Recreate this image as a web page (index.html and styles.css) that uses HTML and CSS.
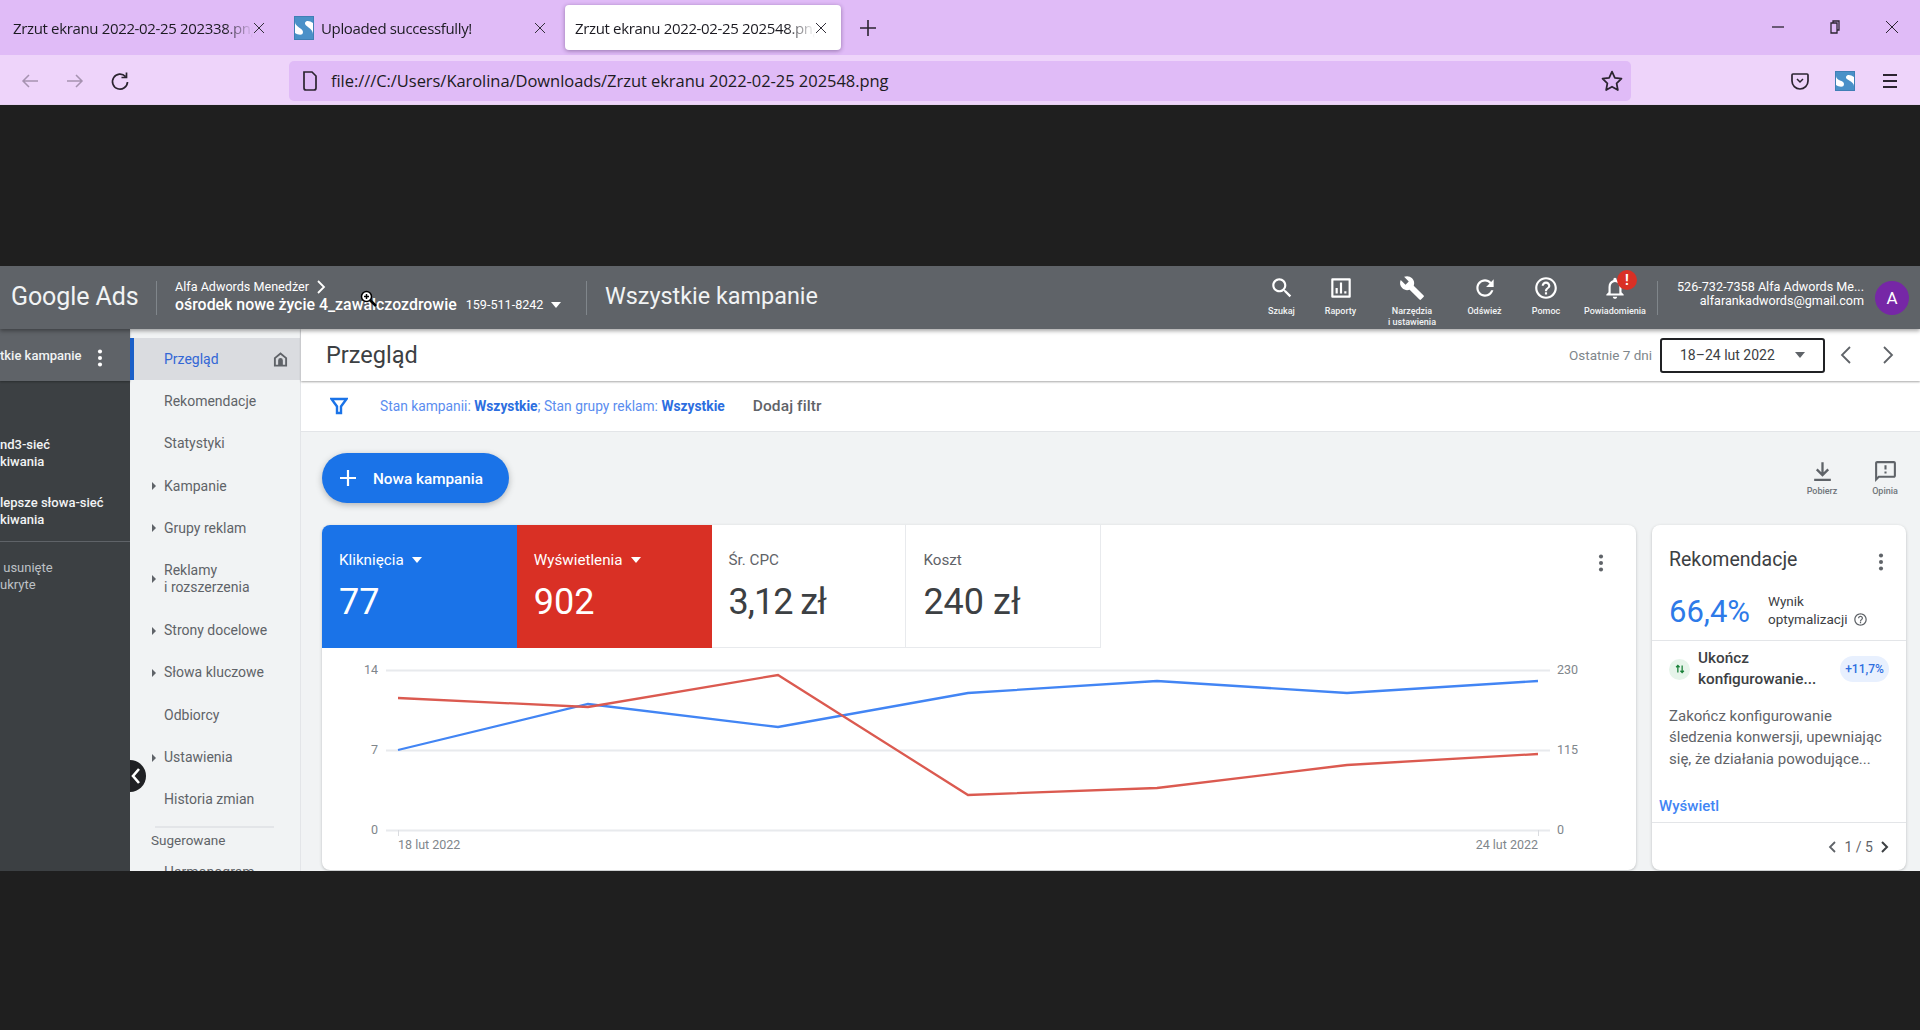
FILE: index.html
```html
<!DOCTYPE html>
<html lang="pl">
<head>
<meta charset="utf-8">
<title>Zrzut ekranu 2022-02-25 202548.png</title>
<link rel="stylesheet" href="styles.css">
</head>
<body>
<div class="tabbar">
  <div class="tab tab-first"><span class="tab-title">Zrzut ekranu 2022-02-25 202338.png</span><svg class="tab-x" viewBox="0 0 12 12"><path d="M1 1l10 10M11 1L1 11" stroke="#33303a" stroke-width="1"/></svg></div>
  <div class="tab tab-second">
    <svg class="favicon" viewBox="0 0 20 24"><rect x=".5" y=".5" width="19" height="23" fill="#fff" stroke="#3f7fb5"/><path d="M1 1h18v6c-3-2-7-3-8 0s8 5 8 11v5H1v-6c3 2 8 3 8-1S1 11 1 6z" fill="#4a90c8"/></svg>
    <span class="tab-title tab-title-plain">Uploaded successfully!</span><svg class="tab-x" viewBox="0 0 12 12"><path d="M1 1l10 10M11 1L1 11" stroke="#33303a" stroke-width="1"/></svg>
  </div>
  <div class="tab tab-active"><span class="tab-title">Zrzut ekranu 2022-02-25 202548.png</span><svg class="tab-x" viewBox="0 0 12 12"><path d="M1 1l10 10M11 1L1 11" stroke="#33303a" stroke-width="1"/></svg></div>
  <svg class="newtab" viewBox="0 0 16 16"><path d="M8 0v16M0 8h16" stroke="#2b2430" stroke-width="1.6"/></svg>
  <div class="winctl">
    <svg viewBox="0 0 14 14"><path d="M1 7h12" stroke="#2b2430" stroke-width="1.3"/></svg>
    <svg viewBox="0 0 14 14"><path d="M5 3V1h6v9H9M3 3h6v10H3z" fill="none" stroke="#2b2430" stroke-width="1.3"/></svg>
    <svg viewBox="0 0 14 14"><path d="M1 1l12 12M13 1L1 13" stroke="#2b2430" stroke-width="1"/></svg>
  </div>
</div>
<div class="toolbar">
  <div class="nav-btns">
    <svg viewBox="0 0 20 20"><path d="M18 10H3M9 4l-6 6 6 6" fill="none" stroke="#a692b0" stroke-width="1.5"/></svg>
    <svg viewBox="0 0 20 20"><path d="M2 10h15M11 4l6 6-6 6" fill="none" stroke="#a692b0" stroke-width="1.5"/></svg>
    <svg viewBox="0 0 20 20"><path d="M15.500 5.500A7.500 7.500 0 1 0 17.500 11M16.500 1.500v5h-5" fill="none" stroke="#2b2430" stroke-width="1.7"/></svg>
  </div>
  <div class="urlbar">
    <svg class="url-file" viewBox="0 0 16 20"><path d="M2 1h8l4 4v12a2 2 0 0 1-2 2H4a2 2 0 0 1-2-2z" fill="none" stroke="#2b2430" stroke-width="1.7"/></svg>
    <span class="url-text">file:///C:/Users/Karolina/Downloads/Zrzut ekranu 2022-02-25 202548.png</span>
    <svg class="url-star" viewBox="0 0 20 20"><path d="M10 1.500l2.600 5.600 6 .8-4.400 4.200 1.100 6.100-5.300-3-5.300 3 1.100-6.100L1.400 7.900l6-.8z" fill="none" stroke="#2b2430" stroke-width="1.6" stroke-linejoin="round"/></svg>
  </div>
  <div class="ext-btns">
    <svg viewBox="0 0 20 20"><path d="M3 3h14a1 1 0 0 1 1 1v6a8 8 0 0 1-16 0V4a1 1 0 0 1 1-1z" fill="none" stroke="#2b2430" stroke-width="1.7"/><path d="M7 8l3 3 3-3" fill="none" stroke="#2b2430" stroke-width="1.5"/></svg>
    <svg viewBox="0 0 20 20"><rect x=".5" y=".5" width="19" height="19" fill="#fff" stroke="#3f7fb5"/><path d="M1 1h18v5c-3-2-7-3-8 0s8 4 8 9v4H1v-5c3 2 8 3 8-1S1 10 1 5z" fill="#4a90c8"/></svg>
    <svg viewBox="0 0 20 20"><path d="M3 4h14M3 10h14M3 16h14" stroke="#2b2430" stroke-width="1.8"/></svg>
  </div>
</div>
<div class="viewer">
  <div class="app">
    <header class="appbar">
      <div class="logo">Google Ads</div>
      <div class="account">
        <div class="account-parent">Alfa Adwords Menedżer
          <svg viewBox="0 0 10 14"><path d="M2 1l6 6-6 6" fill="none" stroke="#fff" stroke-width="1.8"/></svg>
        </div>
        <div class="account-name"><b>ośrodek nowe życie 4_zawalczozdrowie</b><span>159-511-8242</span><i class="caret caret-white"></i></div>
      </div>
      <div class="page-title">Wszystkie kampanie</div>
      <div class="tools">
        <div class="tool"><svg viewBox="0 0 24 24"><path d="M15.500 14h-.79l-.28-.27C15.410 12.590 16 11.110 16 9.500 16 5.910 13.090 3 9.500 3S3 5.910 3 9.500 5.910 16 9.500 16c1.610 0 3.090-.59 4.230-1.570l.27.28v.79l5 4.990L20.490 19l-4.990-5zm-6 0C7.010 14 5 11.990 5 9.500S7.010 5 9.500 5 14 7.010 14 9.500 11.990 14 9.500 14z"/></svg><span>Szukaj</span></div>
        <div class="tool"><svg viewBox="0 0 24 24"><path d="M4 3h16a1 1 0 0 1 1 1v16a1 1 0 0 1-1 1H4a1 1 0 0 1-1-1V4a1 1 0 0 1 1-1zm1 2v14h14V5zm2 7h2v5H7zm4-5h2v10h-2zm4 8h2v2h-2z"/></svg><span>Raporty</span></div>
        <div class="tool"><svg viewBox="0 0 24 24"><path d="M22.700 19l-9.100-9.100c.9-2.300.4-5-1.500-6.900-2-2-5-2.400-7.400-1.300L9 6 6 9 1.600 4.700C.4 7.100.9 10.100 2.900 12.100c1.900 1.900 4.600 2.400 6.900 1.500l9.100 9.100c.4.4 1 .4 1.400 0l2.300-2.300c.5-.4.5-1.100.1-1.400z"/></svg><span>Narzędzia<br>i ustawienia</span></div>
        <div class="tool"><svg viewBox="0 0 24 24"><path d="M17.650 6.350C16.200 4.900 14.210 4 12 4c-4.420 0-7.990 3.580-7.990 8s3.570 8 7.990 8c3.730 0 6.840-2.550 7.730-6h-2.080c-.82 2.330-3.040 4-5.650 4-3.310 0-6-2.690-6-6s2.690-6 6-6c1.660 0 3.140.69 4.220 1.780L13 11h7V4l-2.350 2.350z"/></svg><span>Odśwież</span></div>
        <div class="tool"><svg viewBox="0 0 24 24"><path d="M11 18h2v-2h-2v2zm1-16C6.480 2 2 6.480 2 12s4.480 10 10 10 10-4.480 10-10S17.520 2 12 2zm0 18c-4.410 0-8-3.590-8-8s3.590-8 8-8 8 3.590 8 8-3.590 8-8 8zm0-14c-2.210 0-4 1.790-4 4h2c0-1.100.9-2 2-2s2 .9 2 2c0 2-3 1.750-3 5h2c0-2.250 3-2.500 3-5 0-2.210-1.790-4-4-4z"/></svg><span>Pomoc</span></div>
        <div class="tool tool-bell"><svg viewBox="0 0 24 24"><path d="M12 22c1.100 0 2-.9 2-2h-4c0 1.100.89 2 2 2zm6-6v-5c0-3.070-1.640-5.640-4.500-6.320V4c0-.83-.67-1.500-1.500-1.500s-1.500.67-1.500 1.500v.68C7.630 5.360 6 7.920 6 11v5l-2 2v1h16v-1l-2-2zm-2 1H8v-6c0-2.480 1.510-4.500 4-4.500s4 2.020 4 4.500v6z"/></svg><span>Powiadomienia</span><em class="alert">!</em></div>
      </div>
      <div class="user">
        <div class="user-text"><div>526-732-7358 Alfa Adwords Me...</div><div>alfarankadwords@gmail.com</div></div>
        <div class="avatar">A</div>
      </div>
    </header>
    <div class="app-body">
      <aside class="side">
        <div class="side-head"><span>tkie kampanie</span><svg class="dots dots-white" viewBox="0 0 6 22"><circle cx="3" cy="3" r="2.500"/><circle cx="3" cy="11" r="2.500"/><circle cx="3" cy="19" r="2.500"/></svg></div>
        <div class="side-group side-group-first"><div>nd3-sieć</div><div>kiwania</div></div>
        <div class="side-group side-group-second"><div>lepsze słowa-sieć</div><div>kiwania</div></div>
        <div class="side-group side-group-muted"><div>&nbsp;usunięte</div><div>ukryte</div></div>
      </aside>
      <nav class="menu">
        <div class="menu-item menu-active">Przegląd
          <svg class="home" viewBox="0 0 16 16"><path d="M8 1.500l6 5v8H2v-8z" fill="none" stroke="#5f6368" stroke-width="2"/><path d="M5.500 14.500V9a2.500 2.500 0 0 1 5 0v5.500z" fill="#5f6368"/></svg>
        </div>
        <div class="menu-item">Rekomendacje</div>
        <div class="menu-item">Statystyki</div>
        <div class="menu-item menu-arrow">Kampanie</div>
        <div class="menu-item menu-arrow">Grupy reklam</div>
        <div class="menu-item menu-arrow menu-tall">Reklamy<br>i rozszerzenia</div>
        <div class="menu-item menu-arrow">Strony docelowe</div>
        <div class="menu-item menu-arrow">Słowa kluczowe</div>
        <div class="menu-item">Odbiorcy</div>
        <div class="menu-item menu-arrow">Ustawienia</div>
        <div class="menu-item">Historia zmian</div>
        <div class="menu-sep"></div>
        <div class="menu-heading">Sugerowane</div>
        <div class="menu-item menu-cut">Harmonogram</div>
      </nav>
      <button class="collapse" type="button" aria-label="Zwiń"><svg viewBox="0 0 10 18"><path d="M8 2L2 9l6 7" fill="none" stroke="#fff" stroke-width="2.600"/></svg></button>
      <main class="main">
        <div class="main-head">
          <h1>Przegląd</h1>
          <div class="range-label">Ostatnie 7 dni</div>
          <div class="range-box"><span>18–24 lut 2022</span><i class="caret caret-grey"></i></div>
          <div class="range-nav">
            <svg viewBox="0 0 12 20"><path d="M10 2L2 10l8 8" fill="none" stroke="#5f6368" stroke-width="1.800"/></svg>
            <svg viewBox="0 0 12 20"><path d="M2 2l8 8-8 8" fill="none" stroke="#5f6368" stroke-width="1.800"/></svg>
          </div>
        </div>
        <div class="filter">
          <svg class="funnel" viewBox="0 0 18 18"><path d="M1.500 2h15L11 9.500V16H7V9.500z" fill="none" stroke="#1a73e8" stroke-width="2.400"/></svg>
          <div class="filter-text">Stan kampanii: <b>Wszystkie</b>; Stan grupy reklam: <b>Wszystkie</b></div>
          <div class="filter-add">Dodaj filtr</div>
        </div>
        <div class="content">
          <div class="actions">
            <button class="fab" type="button"><svg viewBox="0 0 18 18"><path d="M9 1v16M1 9h16" stroke="#fff" stroke-width="2.200"/></svg><span>Nowa kampania</span></button>
            <div class="action-icons">
              <div class="action"><svg viewBox="0 0 24 24"><path d="M12 3v12M6.500 10l5.500 5.500 5.500-5.500M4 20h16" fill="none" stroke="#5f6368" stroke-width="2.200"/></svg><span>Pobierz</span></div>
              <div class="action"><svg viewBox="0 0 24 24"><path d="M20 2H4c-1.100 0-2 .9-2 2v18l4-4h14c1.100 0 2-.9 2-2V4c0-1.100-.9-2-2-2zm0 14H5.170L4 17.170V4h16v12zM11 12h2v2h-2zm0-6h2v4h-2z" fill="#5f6368"/></svg><span>Opinia</span></div>
            </div>
          </div>
          <div class="cards">
            <section class="card chart-card">
              <div class="metrics">
                <div class="metric metric-blue"><div class="metric-label">Kliknięcia<i class="caret caret-white"></i></div><div class="metric-value">77</div></div>
                <div class="metric metric-red"><div class="metric-label">Wyświetlenia<i class="caret caret-white"></i></div><div class="metric-value">902</div></div>
                <div class="metric"><div class="metric-label">Śr. CPC</div><div class="metric-value metric-tight">3,12 zł</div></div>
                <div class="metric"><div class="metric-label">Koszt</div><div class="metric-value">240 zł</div></div>
                <svg class="dots dots-grey metrics-menu" viewBox="0 0 6 22"><circle cx="3" cy="3" r="2.500"/><circle cx="3" cy="11" r="2.500"/><circle cx="3" cy="19" r="2.500"/></svg>
              </div>
              <svg class="chart" viewBox="0 0 1314 222" width="1314" height="222">
                <path d="M64 22.500H1228M64 102.500H1228M64 182.500H1228" stroke="#e8eaed" stroke-width="1.800" fill="none"/>
                <path d="M76.500 182v6M1216.500 182v6" stroke="#dadce0"/>
                <polyline points="76,102 266,56 456,79 646,45 835,33 1025,45 1216,33" fill="none" stroke="#4285f4" stroke-width="2.300"/>
                <polyline points="76,50 266,59 456,27 646,147 835,140 1025,117 1216,106" fill="none" stroke="#db5a50" stroke-width="2.300"/>
                <g class="axis">
                  <text x="56" y="26" text-anchor="end">14</text>
                  <text x="56" y="106" text-anchor="end">7</text>
                  <text x="56" y="186" text-anchor="end">0</text>
                  <text x="1235" y="26">230</text>
                  <text x="1235" y="106">115</text>
                  <text x="1235" y="186">0</text>
                  <text x="76" y="201">18 lut 2022</text>
                  <text x="1216" y="201" text-anchor="end">24 lut 2022</text>
                </g>
              </svg>
            </section>
            <section class="card rec-card">
              <div class="rec-top">
                <div class="rec-title"><h2>Rekomendacje</h2><svg class="dots dots-grey" viewBox="0 0 6 22"><circle cx="3" cy="3" r="2.500"/><circle cx="3" cy="11" r="2.500"/><circle cx="3" cy="19" r="2.500"/></svg></div>
                <div class="rec-score"><div class="score">66,4%</div><div class="score-label">Wynik<br>optymalizacji<svg viewBox="0 0 24 24"><path d="M11 18h2v-2h-2v2zm1-16C6.480 2 2 6.480 2 12s4.480 10 10 10 10-4.480 10-10S17.520 2 12 2zm0 18c-4.410 0-8-3.590-8-8s3.590-8 8-8 8 3.590 8 8-3.590 8-8 8zm0-14c-2.210 0-4 1.790-4 4h2c0-1.100.9-2 2-2s2 .9 2 2c0 2-3 1.750-3 5h2c0-2.250 3-2.500 3-5 0-2.210-1.790-4-4-4z" fill="#5f6368"/></svg></div></div>
              </div>
              <div class="rec-body">
                <div class="rec-row">
                  <span class="rec-icon"><svg viewBox="0 0 14 14"><path d="M4.500 11V3M2.500 5l2-2.200 2 2.200M9.500 3v8M7.500 9l2 2.200 2-2.200" fill="none" stroke="#188038" stroke-width="1.500"/></svg></span>
                  <div class="rec-name">Ukończ<br>konfigurowanie...</div>
                  <span class="rec-badge">+11,7%</span>
                </div>
                <p class="rec-desc">Zakończ konfigurowanie<br>śledzenia konwersji, upewniając<br>się, że działania powodujące...</p>
                <div class="rec-link">Wyświetl</div>
              </div>
              <div class="rec-foot">
                <svg viewBox="0 0 10 14"><path d="M8 2L3 7l5 5" fill="none" stroke="#5f6368" stroke-width="1.800"/></svg>
                <span>1 / 5</span>
                <svg viewBox="0 0 10 14"><path d="M2 2l5 5-5 5" fill="none" stroke="#3c4043" stroke-width="2"/></svg>
              </div>
            </section>
          </div>
        </div>
      </main>
    </div>
    <svg class="cursor" viewBox="0 0 18 18"><path d="M9 9l7 7" stroke="#000" stroke-width="2.500"/><circle cx="6.500" cy="6.500" r="5" fill="#fff" stroke="#000" stroke-width="1.500"/><path d="M6.500 4v5M4 6.500h5" stroke="#000" stroke-width="1.500"/></svg>
  </div>
</div>
</body>
</html>
```
FILE: styles.css
```css
* { box-sizing: border-box; }
html, body { margin: 0; height: 100%; overflow: hidden; }
body { background: #1f1f1f; font-family: Roboto, "Liberation Sans", sans-serif; color: #3c4043; }
h1, h2, p { margin: 0; font-weight: 400; }
svg { display: block; flex: none; }

/* browser chrome */
.tabbar { height: 55px; background: #e0bbf7; display: flex; align-items: flex-start; padding-top: 5px; font-family: "Open Sans", "Noto Sans", sans-serif; color: #1c1b22; }
.tab { height: 45px; display: flex; align-items: center; font-size: 15px; }
.tab-first { width: 277px; padding: 0 0 0 13px; }
.tab-second { width: 288px; padding-left: 17px; }
.tab-active { width: 276px; padding-left: 10px; background: #fff; border-radius: 4px; box-shadow: 0 1px 4px rgba(60, 30, 80, .45); }
.tab-title { width: 240px; overflow: hidden; white-space: nowrap; -webkit-mask-image: linear-gradient(90deg, #000 88%, transparent); mask-image: linear-gradient(90deg, #000 88%, transparent); letter-spacing: -.35px; }
.tab-title-plain { width: 213px; margin-left: 7px; }
.tab-x { width: 12px; height: 12px; }
.favicon { width: 20px; height: 24px; }
.newtab { width: 16px; height: 16px; margin: 15px 0 0 19px; }
.winctl { margin-left: auto; display: flex; gap: 43px; padding: 15px 21px 0 0; }
.winctl svg { width: 14px; height: 14px; }

.toolbar { height: 50px; background: #eed4fa; display: flex; align-items: center; padding-top: 2px; border-bottom: 1px solid #e6d0f0; }
.nav-btns { width: 289px; display: flex; gap: 25px; padding-left: 20px; }
.nav-btns svg { width: 20px; height: 20px; }
.urlbar { width: 1342px; height: 40px; border-radius: 5px; background: #e0bbf7; display: flex; align-items: center; padding: 0 8px 0 13px; }
.url-file { width: 16px; height: 20px; }
.url-text { margin-left: 13px; font-family: "Open Sans", "Noto Sans", sans-serif; font-size: 16.500px; color: #1c1b22; letter-spacing: -.05px; }
.url-star { width: 22px; height: 22px; margin-left: auto; }
.ext-btns { display: flex; align-items: center; gap: 25px; margin-left: 159px; }
.ext-btns svg { width: 20px; height: 20px; }

/* screenshot viewer */
.viewer { padding-top: 161px; }
.app { position: relative; height: 605px; background: #f1f3f4; overflow: hidden; display: flex; flex-direction: column; }

/* app bar */
.appbar { height: 63px; flex: none; background: #5f6368; color: #fff; display: flex; align-items: center; box-shadow: 0 2px 4px rgba(0, 0, 0, .35); position: relative; z-index: 3; }
.logo { width: 157px; height: 34px; line-height: 32px; padding-left: 11px; font-size: 25px; color: #f1f3f4; border-right: 1px solid #80868b; letter-spacing: -.1px; }
.account { width: 412px; height: 34px; margin-left: 18px; border-right: 1px solid #80868b; }
.account-parent { display: flex; align-items: center; gap: 7px; font-size: 12.600px; line-height: 16px; margin-top: -2px; }
.account-parent svg { width: 10px; height: 14px; }
.account-name { display: flex; align-items: center; font-size: 15.900px; line-height: 20px; white-space: nowrap; }
.account-name b { font-weight: 500; }
.account-name span { font-size: 12.600px; margin-left: 9px; }
.caret { display: inline-block; width: 0; height: 0; border: 5.500px solid transparent; border-bottom: 0; border-top: 6px solid #fff; }
.caret-white { margin-left: 8px; }
.caret-grey { border-top-color: #5f6368; }
.page-title { width: 665px; padding-left: 18px; margin-top: -4px; font-size: 23.400px; color: #f1f3f4; }
.tools { display: grid; grid-template-columns: 59px 59px 84px 61px 62px 76px; width: 401px; height: 63px; }
.tool { position: relative; display: flex; flex-direction: column; align-items: center; padding-top: 9px; font-size: 9px; line-height: 11px; font-weight: 500; text-align: center; color: #f1f3f4; }
.tool svg { width: 26px; height: 26px; fill: #fff; margin-bottom: 5px; }
.alert { position: absolute; left: 40px; top: 4px; width: 20px; height: 20px; border-radius: 50%; background: #d93025; color: #fff; font: 700 14px/20px Roboto, sans-serif; }
.user { margin-left: 4px; height: 34px; flex: 1; display: flex; align-items: center; border-left: 1px solid #80868b; }
.user-text { width: 206px; align-self: flex-start; margin-top: -1px; font-size: 12.600px; line-height: 14.500px; text-align: right; }
.avatar { width: 34px; height: 34px; margin-left: 11px; border-radius: 50%; background: #7627a6; text-align: center; font-size: 17px; line-height: 34px; }

.app-body { position: relative; flex: 1; min-height: 0; display: flex; }

/* far left list */
.side { width: 130px; flex: none; background: #3c4043; color: #f1f3f4; font-size: 13px; font-weight: 500; line-height: 17px; white-space: nowrap; }
.side-head { height: 52px; background: #5f6368; display: flex; align-items: center; justify-content: space-between; padding: 0 27px 0 0; box-shadow: 0 1px 2px rgba(0, 0, 0, .3); }
.side-head span { margin-top: 1px; }
.side-head .dots { margin-top: 5px; }
.dots { width: 6px; height: 18px; }
.dots-white { fill: #fff; }
.dots-grey { fill: #5f6368; }
.side-group-first { margin-top: 55px; }
.side-group-second { margin-top: 24px; padding-bottom: 13px; border-bottom: 1px solid #5f6368; }
.side-group-muted { margin-top: 17px; color: #bdc1c6; font-weight: 400; }

/* section menu */
.menu { width: 171px; flex: none; padding-top: 9px; border-right: 1px solid #e3e5e8; font-size: 14px; line-height: 17px; color: #5f6368; overflow: hidden; }
.menu-item { position: relative; height: 42.300px; display: flex; align-items: center; padding-left: 34px; }
.menu-active { background: #dadce0; color: #3367d6; border-left: 4px solid #1a5fc8; padding-left: 30px; }
.home { width: 15px; height: 15px; margin-left: auto; margin-right: 12px; }
.menu-arrow::before { content: ""; position: absolute; left: 22px; top: 50%; margin-top: -4px; border: 4px solid transparent; border-right: 0; border-left: 4px solid #5f6368; }
.menu-tall { height: 60px; }
.menu-sep { height: 2px; margin: 5px 26px 0 25px; background: #e3e5e8; }
.menu-heading { margin: 4px 0 0 21px; font-size: 13.500px; line-height: 17px; }
.menu-cut { margin-top: 2px; }
.collapse { position: absolute; left: 130px; top: 431px; width: 16px; height: 32px; padding: 0 0 0 1px; border: 0; border-radius: 0 16px 16px 0; background: #202124; z-index: 2; }
.collapse svg { width: 10px; height: 18px; }

/* main */
.main { flex: 1; min-width: 0; display: flex; flex-direction: column; }
.main-head { height: 52px; flex: none; padding-left: 25px; background: #fff; display: flex; align-items: center; box-shadow: 0 1px 2px rgba(0, 0, 0, .35); position: relative; z-index: 1; }
.main-head h1 { font-size: 23.500px; color: #3c4043; }
.range-label { margin-left: auto; font-size: 13.500px; color: #80868b; }
.range-box { width: 165px; height: 35px; margin: 0 0 0 8px; display: flex; align-items: center; justify-content: space-between; padding: 0 18px; border: 2px solid #202124; border-radius: 3px; font-size: 14px; color: #3c4043; }
.range-nav { width: 84px; margin-right: 11px; display: flex; justify-content: space-around; }
.range-nav svg { width: 12px; height: 20px; }
.filter { height: 51px; flex: none; background: #fff; border-bottom: 1px solid #e3e5e8; display: flex; align-items: center; padding-left: 29px; font-size: 13.800px; }
.funnel { width: 18px; height: 18px; }
.filter-text { margin-left: 32px; color: #5b8def; white-space: nowrap; }
.filter-text b { font-weight: 700; color: #2c6ee0; }
.filter-add { margin-left: 28px; font-size: 15.500px; font-weight: 500; letter-spacing: .1px; color: #5f6368; }
.content { flex: 1; min-height: 0; padding: 21px 14px 0 21px; }
.actions { height: 50px; display: flex; justify-content: space-between; align-items: center; }
.fab { height: 50px; width: 187px; display: flex; align-items: center; gap: 16px; padding: 0 0 0 17px; border: 0; border-radius: 25px; background: #1a73e8; color: #fff; font: 500 15.300px Roboto, sans-serif; box-shadow: 0 2px 6px rgba(60, 64, 67, .35); }
.fab svg { width: 18px; height: 18px; }
.fab span { margin-top: 2px; }
.action-icons { display: flex; gap: 21px; }
.action { width: 42px; display: flex; flex-direction: column; align-items: center; gap: 2px; font-size: 9px; line-height: 11px; font-weight: 500; color: #70757a; }
.action svg { width: 25px; height: 25px; }
.cards { margin-top: 22px; display: flex; gap: 16px; }
.card { height: 345px; background: #fff; border-radius: 8px; box-shadow: 0 1px 3px rgba(60, 64, 67, .3); overflow: hidden; }
.chart-card { width: 1314px; flex: none; }
.metrics { position: relative; height: 123px; display: flex; }
.metric { width: 194.800px; height: 123px; padding: 24px 0 0 17px; border-right: 1px solid #e8eaed; border-bottom: 1px solid #e8eaed; color: #5f6368; }
.metric-blue { background: #1a73e8; color: #fff; border: 0; }
.metric-red { background: #d93025; color: #fff; border: 0; }
.metric-label { height: 22px; font-size: 15.200px; line-height: 22px; }
.metric-value { margin-top: 11px; font-size: 36px; line-height: 40px; color: #3c4043; }
.metric-tight { letter-spacing: -1px; }
.metric-blue .metric-value, .metric-red .metric-value { color: #fff; }
.metric-label .caret { vertical-align: 2px; }
.metrics-menu { position: absolute; right: 32px; top: 29px; }
.axis { font: 12.500px Roboto, sans-serif; fill: #80868b; }
.rec-card { width: 254px; flex: none; display: flex; flex-direction: column; }
.rec-top { height: 116px; flex: none; border-bottom: 1px solid #e3e5e8; padding: 22px 22px 0 17px; }
.rec-title { display: flex; justify-content: space-between; align-items: center; height: 24px; }
.rec-title h2 { font-size: 19.500px; color: #3c4043; }
.rec-title .dots { margin-top: 6px; }
.rec-score { display: flex; align-items: center; margin-top: 21px; }
.score { width: 99px; font-size: 31px; line-height: 40px; color: #2d7ae8; }
.score-label { margin-top: -4px; font-size: 13.500px; line-height: 18px; color: #3c4043; }
.score-label svg { display: inline-block; width: 15px; height: 15px; margin-left: 6px; vertical-align: -3px; }
.rec-body { height: 182px; flex: none; border-bottom: 1px solid #e3e5e8; }
.rec-row { height: 56px; display: flex; align-items: center; padding: 0 17px; }
.rec-icon { width: 21px; height: 21px; flex: none; border-radius: 50%; background: #e6f4ea; display: flex; align-items: center; justify-content: center; }
.rec-icon svg { width: 12px; height: 12px; }
.rec-name { width: 125px; margin-left: 8px; font-size: 15.300px; line-height: 21px; font-weight: 500; color: #3c4043; white-space: nowrap; }
.rec-badge { width: 49px; height: 26px; margin-left: auto; border-radius: 13px; background: #e8f0fe; color: #2d6ee0; font-size: 12px; font-weight: 500; line-height: 26px; text-align: center; white-space: nowrap; }
.rec-desc { margin: 9px 0 0 17px; font-size: 15px; line-height: 21.300px; color: #5f6368; white-space: nowrap; }
.rec-link { margin: 27px 0 0 7px; font-size: 15px; font-weight: 500; color: #4285f4; line-height: 18px; }
.rec-foot { flex: 1; display: flex; align-items: center; justify-content: flex-end; padding: 0 16px 0 0; font-size: 14px; color: #5f6368; }
.rec-foot span { margin: 0 7px 0 8px; }
.rec-foot svg { width: 10px; height: 14px; }
.cursor { position: absolute; left: 360px; top: 24px; width: 18px; height: 18px; z-index: 5; }
```
